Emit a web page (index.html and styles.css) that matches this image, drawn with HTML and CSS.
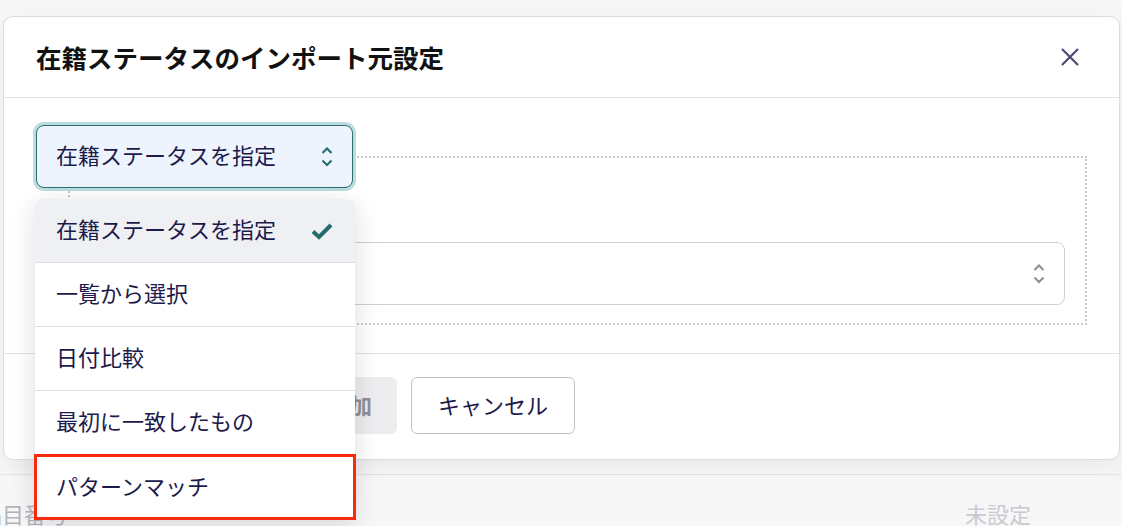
FILE: index.html
```html
<!DOCTYPE html>
<html lang="ja">
<head>
  <meta charset="UTF-8">
  <meta name="viewport" content="width=device-width, initial-scale=1.0">
  <title>在籍ステータスのインポート元設定</title>
  <link rel="stylesheet" href="styles.css">
</head>
<body>
  <div class="page">
    <div class="page-row">
      <span class="page-cell">品目番号</span>
      <span class="page-cell page-cell-muted">未設定</span>
    </div>
  </div>

  <div class="modal">
    <div class="modal-header">
      <h1>在籍ステータスのインポート元設定</h1>
      <button class="close-btn" aria-label="閉じる">
        <svg width="18" height="18" viewBox="0 0 18 18"><path d="M1 1 L17 17 M17 1 L1 17" stroke="currentColor" stroke-width="2.2" fill="none"/></svg>
      </button>
    </div>

    <div class="modal-body">
      <div class="mode-select">
        <div class="select select-active">
          <span>在籍ステータスを指定</span>
          <svg class="chevrons" width="12" height="20" viewBox="0 0 12 20"><path d="M1.5 6 L6 1.5 L10.5 6 M1.5 13.5 L6 18 L10.5 13.5" stroke="currentColor" stroke-width="2.2" fill="none"/></svg>
        </div>
        <ul class="dropdown">
          <li class="option option-selected">
            <span>在籍ステータスを指定</span>
            <svg width="22" height="18" viewBox="0 0 22 18"><path d="M2 9.5 L8 15 L20 3" stroke="currentColor" stroke-width="4" fill="none"/></svg>
          </li>
          <li class="option">一覧から選択</li>
          <li class="option">日付比較</li>
          <li class="option">最初に一致したもの</li>
          <li class="option option-marked">パターンマッチ</li>
        </ul>
      </div>

      <div class="group">
        <div class="select">
          <span></span>
          <svg class="chevrons" width="12" height="20" viewBox="0 0 12 20"><path d="M1.5 6 L6 1.5 L10.5 6 M1.5 13.5 L6 18 L10.5 13.5" stroke="currentColor" stroke-width="2" fill="none"/></svg>
        </div>
      </div>
    </div>

    <div class="modal-footer">
      <button class="btn btn-disabled">追加</button>
      <button class="btn">キャンセル</button>
    </div>
  </div>
</body>
</html>
```

FILE: styles.css
```css
body {
  font-family: 'Noto Sans CJK JP', 'Noto Sans', sans-serif;
  background: #f7f7f8;
  margin: 0;
  height: 526px;
  overflow: hidden;
  position: relative;
  color: #1c1a4a;
}

.page-row {
  margin-top: 474px;
  border-top: 1px solid #e6e6e9;
  padding: 22px 91px 0 0;
  display: flex;
  justify-content: space-between;
  font-size: 22px;
  line-height: 32px;
}

.page-cell {
  color: #b4b4bc;
  margin-left: -20px;
}

.page-cell-muted {
  color: #c9c9d0;
}

.modal {
  position: absolute;
  top: 16px;
  left: 3px;
  width: 1117px;
  box-sizing: border-box;
  background: #fff;
  border: 1px solid #dcdce0;
  border-radius: 10px;
  box-shadow: 0 8px 24px rgba(0, 0, 0, 0.06);
}

.modal-header {
  height: 80px;
  padding: 0 32px;
  display: flex;
  align-items: center;
  justify-content: space-between;
  border-bottom: 1px solid #e2e2e6;
}

.modal-header h1 {
  margin: 0;
  font-size: 25.5px;
  font-weight: bold;
  color: #111;
  line-height: 34px;
}

.close-btn {
  width: 34px;
  height: 34px;
  padding: 0;
  border: none;
  background: none;
  color: #4b4a74;
  display: flex;
  align-items: center;
  justify-content: center;
}

.modal-body {
  padding: 27px 32px 28px;
}

.mode-select {
  position: relative;
  z-index: 2;
  width: 317px;
}

.select {
  height: 63px;
  box-sizing: border-box;
  border: 1px solid #cfcfd4;
  border-radius: 8px;
  padding: 0 19px;
  display: flex;
  align-items: center;
  justify-content: space-between;
  font-size: 22px;
  background: #fff;
  color: #8c8c94;
}

.select span {
  padding-bottom: 5px;
}

.select-active {
  background: #eef4fd;
  border-color: #2d6e70;
  box-shadow: 0 0 0 3px #bcdcdf;
  color: #1c1a4a;
}

.select-active .chevrons {
  color: #2a6f72;
}

.dropdown {
  position: absolute;
  top: calc(100% + 11px);
  left: -1px;
  width: 320px;
  margin: 0;
  padding: 0;
  list-style: none;
  background: #fff;
  border-radius: 8px 8px 0 0;
  box-shadow: 0 6px 26px rgba(20, 20, 40, 0.14);
}

.option {
  height: 63px;
  box-sizing: border-box;
  padding: 0 22px 5px 21px;
  display: flex;
  align-items: center;
  justify-content: space-between;
  font-size: 22px;
  color: #1c1a4a;
  border-bottom: 1px solid #dedee2;
}

.option-selected {
  height: 64px;
  background: #eff0f3;
  border-radius: 8px 8px 0 0;
}

.option-selected svg {
  color: #246b6e;
  margin-top: 5px;
}

.option:not(.option-selected) {
  height: 64px;
}

.option-marked {
  height: 63px;
  border-bottom: none;
  outline: 3px solid #fa2a0c;
  outline-offset: -2px;
}

.group {
  margin: -32px 0 0 32px;
  border: 2px dotted #c8c8cd;
  padding: 84px 20px 18px;
}

.modal-footer {
  border-top: 1px solid #e2e2e6;
  padding: 23px 32px 25px;
  display: flex;
  gap: 14px;
}

.btn {
  height: 57px;
  padding: 0 26px 4px;
  font-family: inherit;
  font-size: 22px;
  color: #1c1a4a;
  background: #fff;
  border: 1px solid #c2c2c8;
  border-radius: 6px;
}

.btn-disabled {
  width: 361px;
  padding-right: 24px;
  text-align: right;
  background: #ededef;
  border-color: #ededef;
  color: #8e8e95;
  font-weight: bold;
}
```
